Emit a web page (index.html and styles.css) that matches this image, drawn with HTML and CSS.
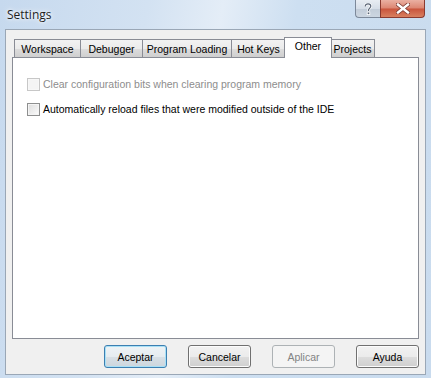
FILE: index.html
```html
<!DOCTYPE html>
<html>
<head>
<meta charset="utf-8">
<link rel="stylesheet" href="styles.css">
</head>
<body>
<div class="window">
  <div class="titlebar">
    <span class="title">Settings</span>
    <div class="caption-buttons">
      <div class="cap help">
        <svg width="10" height="12" viewBox="0 0 10 12"><path d="M2.2 3.6 C2.2 1.6 3.6 0.9 5 0.9 C6.8 0.9 7.8 2 7.8 3.3 C7.8 5 5.5 5.3 5.5 7.3 L5.5 8" fill="none" stroke="#ffffff" stroke-width="2.6"/><path d="M2.2 3.6 C2.2 1.6 3.6 0.9 5 0.9 C6.8 0.9 7.8 2 7.8 3.3 C7.8 5 5.5 5.3 5.5 7.3 L5.5 8" fill="none" stroke="#5a6576" stroke-width="1.2"/><rect x="4.2" y="9" width="2.6" height="2.6" fill="#5a6576" stroke="#fff" stroke-width="0.8"/></svg>
      </div>
      <div class="cap close">
        <svg width="14" height="11" viewBox="0 0 14 11"><path d="M2 1.5 L12 9.5 M12 1.5 L2 9.5" stroke="#7b3a32" stroke-width="4" stroke-linecap="square"/><path d="M2 1.5 L12 9.5 M12 1.5 L2 9.5" stroke="#ffffff" stroke-width="2.4" stroke-linecap="square"/></svg>
      </div>
    </div>
  </div>
  <div class="client">
    <div class="tabs">
      <div class="tab t-ws">Workspace</div>
      <div class="tab t-db">Debugger</div>
      <div class="tab t-pl">Program Loading</div>
      <div class="tab t-hk">Hot Keys</div>
      <div class="tab t-ot selected">Other</div>
      <div class="tab t-pr">Projects</div>
    </div>
    <div class="pane">
      <label class="check disabled"><span class="box"></span><span>Clear configuration bits when clearing program memory</span></label>
      <label class="check"><span class="box"></span><span>Automatically reload files that were modified outside of the IDE</span></label>
    </div>
    <div class="buttons">
      <div class="btn default">Aceptar</div>
      <div class="btn">Cancelar</div>
      <div class="btn disabled">Aplicar</div>
      <div class="btn">Ayuda</div>
    </div>
  </div>
</div>
</body>
</html>
```

FILE: styles.css
```css
html, body {
  margin: 0;
  padding: 0;
}
body {
  width: 431px;
  height: 378px;
  overflow: hidden;
  font-family: "Liberation Sans", Arial, sans-serif;
  font-size: 10.5px;
  color: #000;
}
.window {
  width: 431px;
  height: 378px;
  display: flex;
  flex-direction: column;
  background: linear-gradient(100deg, #c6d9ee 0%, #d3e2f2 30%, #e4edf7 45%, #cddff1 60%, #c9dbee 100%);
}
.titlebar {
  height: 29px;
  display: flex;
  justify-content: space-between;
  align-items: flex-start;
  flex-shrink: 0;
}
.title {
  font-family: "Open Sans", "Liberation Sans", sans-serif;
  font-size: 12px;
  margin: 6px 0 0 7px;
  color: #1e1e1e;
  text-shadow: 0 0 6px #fff, 0 0 3px #fff;
}
.caption-buttons {
  display: flex;
  margin-right: 6px;
}
.cap {
  height: 18px;
  display: flex;
  align-items: center;
  justify-content: center;
  border: 1px solid #7d899a;
  border-top: none;
  box-sizing: border-box;
}
.help {
  width: 25px;
  border-radius: 0 0 0 4px;
  border-right: none;
  background: linear-gradient(#e8edf3 0%, #d6dee8 50%, #c2ccd8 51%, #ccd6e1 100%);
}
.close {
  width: 45px;
  border-radius: 0 0 4px 0;
  border-color: #8a3a30;
  background: linear-gradient(#eab0a2 0%, #dc8672 48%, #c9543c 52%, #d88060 100%);
}
.client {
  flex: 1;
  margin: 0 5px 3px 5px;
  border: 1px solid #9aa7b6;
  background: #f0f0f0;
  display: flex;
  flex-direction: column;
  padding: 0 6px 0 6px;
}
.tabs {
  display: flex;
  height: 19px;
  margin-top: 8px;
  padding-left: 2px;
  align-items: flex-end;
  position: relative;
  z-index: 1;
}
.tab {
  height: 18px;
  box-sizing: border-box;
  border: 1px solid #898c95;
  border-bottom: none;
  border-left: none;
  background: linear-gradient(#f2f2f2 0%, #ebebeb 50%, #dddddd 51%, #cfcfcf 100%);
  display: flex;
  align-items: center;
  justify-content: center;
  padding-top: 1px;
  color: #000;
}
.tab:first-child { border-left: 1px solid #898c95; }
.t-ws { width: 67px; }
.t-db { width: 62px; }
.t-pl { width: 89px; }
.t-hk { width: 54px; }
.t-ot { width: 46px; }
.t-pr { width: 44px; }
.tab.selected {
  height: 21px;
  width: 48px;
  margin: 0 -1px 0 -2px;
  border-left: 1px solid #898c95;
  background: #ffffff;
  padding-top: 0;
  padding-bottom: 4px;
  margin-bottom: -1px;
  position: relative;
  z-index: 2;
}
.pane {
  height: 282px;
  box-sizing: border-box;
  border: 1px solid #898c95;
  background: #ffffff;
  padding: 19px 0 0 14px;
  display: flex;
  flex-direction: column;
  gap: 11px;
}
.check {
  display: flex;
  align-items: center;
  gap: 3px;
  height: 14px;
}
.box {
  width: 13px;
  height: 13px;
  box-sizing: border-box;
  border: 1px solid #8e8f8f;
  background: linear-gradient(135deg, #dcdcdc 0%, #f2f2f2 70%, #ffffff 100%);
  box-shadow: inset 0 0 0 1px #f4f4f4;
}
.check.disabled { color: #8d8d8d; }
.check.disabled .box {
  border-color: #c7c7c7;
  background: #f4f4f4;
  box-shadow: inset 0 0 0 1px #f7f7f7;
}
.buttons {
  display: flex;
  justify-content: flex-end;
  gap: 21px;
  margin-top: 6px;
  padding-right: 0;
}
.btn {
  width: 63px;
  height: 23px;
  box-sizing: border-box;
  border: 1px solid #707070;
  border-radius: 3px;
  background: linear-gradient(#f2f2f2 0%, #ebebeb 50%, #dddddd 51%, #cfcfcf 100%);
  box-shadow: inset 0 0 0 1px #fcfcfc;
  display: flex;
  align-items: center;
  justify-content: center;
}
.btn.default {
  border-color: #3c7fb1;
  box-shadow: inset 0 0 0 1px #a8e0f6;
  background: linear-gradient(#eef3f6 0%, #e6ecf0 50%, #d8e0e6 51%, #cdd6dd 100%);
}
.btn.disabled {
  border-color: #adb2b5;
  background: #f4f4f4;
  box-shadow: none;
  color: #838383;
}
```
